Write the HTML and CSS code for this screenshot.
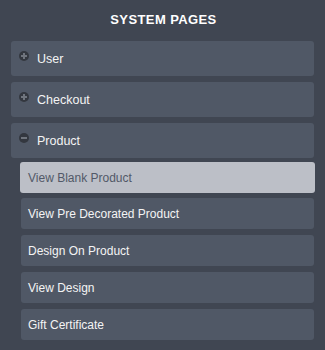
FILE: index.html
```html
<!DOCTYPE html>
<html>

<head>
    <title>System Pages</title>
    <link rel="stylesheet" href="styles.css">
</head>

<body>
    <div class="panel">
        <h1 class="panel-title">SYSTEM PAGES</h1>

        <div class="acc-head">
            <span class="acc-icon plus"></span>
            <span>User</span>
        </div>

        <div class="acc-head">
            <span class="acc-icon plus"></span>
            <span>Checkout</span>
        </div>

        <div class="acc-head">
            <span class="acc-icon minus"></span>
            <span>Product</span>
        </div>

        <ul class="sub-list">
            <li class="sub-item active">View Blank Product</li>
            <li class="sub-item">View Pre Decorated Product</li>
            <li class="sub-item">Design On Product</li>
            <li class="sub-item">View Design</li>
            <li class="sub-item">Gift Certificate</li>
        </ul>
    </div>
</body>
</html>
```

FILE: styles.css
```css
body {
    margin: 0;
    background-color: #404652;
    font-family: "Liberation Sans", Arial, sans-serif;
}

.panel {
    padding: 0 11px;
}

.panel-title {
    margin: 0;
    height: 41px;
    line-height: 40px;
    font-size: 13px;
    font-weight: bold;
    letter-spacing: 0.4px;
    text-align: center;
    color: #fff;
    padding-left: 2px;
}

.acc-head {
    display: flex;
    align-items: center;
    height: 35px;
    margin-bottom: 6px;
    padding-left: 8px;
    background-color: #505866;
    border-radius: 3px;
    color: #f4f4f4;
    font-size: 12.5px;
}

.acc-head:nth-of-type(3) {
    margin-bottom: 4px;
}

.acc-icon {
    position: relative;
    width: 10px;
    height: 10px;
    margin-right: 8px;
    margin-top: -5px;
    border-radius: 50%;
    background-color: #33373f;
}

.acc-icon::before,
.acc-icon.plus::after {
    content: "";
    position: absolute;
    background-color: #6f747d;
}

.acc-icon::before {
    left: 2px;
    top: 4px;
    width: 6px;
    height: 2px;
}

.acc-icon.plus::after {
    left: 4px;
    top: 2px;
    width: 2px;
    height: 6px;
}

.sub-list {
    list-style: none;
    margin: 0 0 0 10px;
    padding: 0;
}

.sub-item {
    height: 31px;
    line-height: 33px;
    margin-bottom: 6px;
    padding-left: 7px;
    background-color: #505866;
    border-radius: 3px;
    color: #f4f4f4;
    font-size: 12px;
}

.sub-item.active {
    margin: 0 -1px 5px -1px;
    padding-left: 8px;
    background-color: #bcbfc7;
    color: #525968;
}
```
